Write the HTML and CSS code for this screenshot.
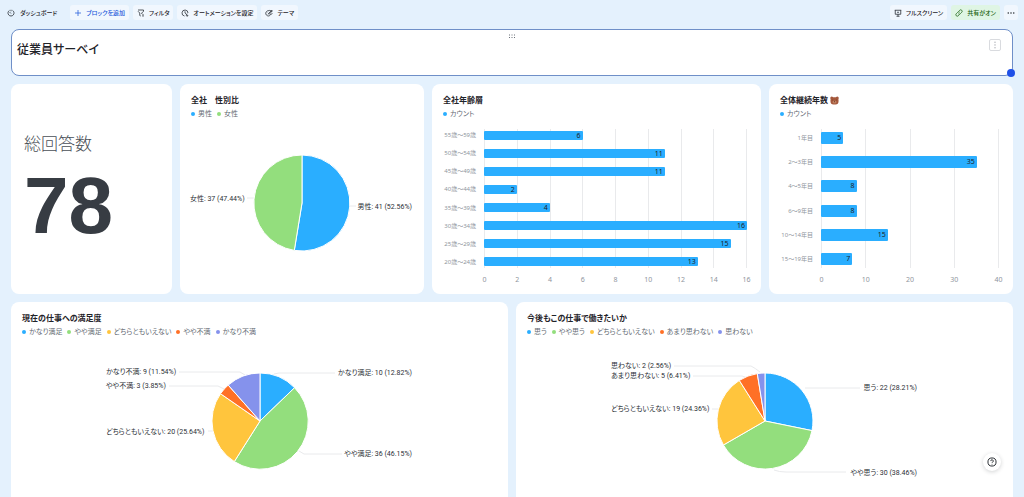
FILE: index.html
```html
<!DOCTYPE html>
<html lang="ja">
<head>
<meta charset="utf-8">
<meta name="viewport" content="width=device-width, initial-scale=1">
<title>従業員サーベイ</title>
<link rel="stylesheet" href="styles.css">
</head>
<body>
<header class="toolbar">
  <div class="view-name">
    <svg class="icon" viewBox="0 0 16 16"><path d="M5 2.8A6 6 0 1 0 11 2.8M8 1.5v3M8 9 5.2 6.2"/></svg>
    <span>ダッシュボード</span>
  </div>
  <button class="btn btn-primary" type="button"><svg class="icon" viewBox="0 0 16 16"><path d="M8 2v12M2 8h12"/></svg>ブロックを追加</button>
  <button class="btn" type="button"><svg class="icon" viewBox="0 0 16 16"><path d="M2 2h11v2.500L9.500 8v2M2 4.500 5.500 8v5l2 1M10 12h4M11 14.500h2"/></svg>フィルタ</button>
  <button class="btn" type="button"><svg class="icon" viewBox="0 0 16 16"><path d="M7 14A6 6 0 1 1 14 8M8 4.500V8l2 1.500M12 9l-2 3.500h4L12 15.500"/></svg>オートメーションを設定</button>
  <button class="btn" type="button"><svg class="icon" viewBox="0 0 16 16"><path d="M14 5C12 1.500 2 2 1.500 8.500c0 6 8 6.500 8 4 0-2 4.500-1 5-4M7 9l6.500-6.500 1 1L9 10 7 10zM4.500 7v.5M7.500 5v.5M4.500 10.500v.5"/></svg>テーマ</button>
  <span class="spacer"></span>
  <button class="btn" type="button"><svg class="icon" viewBox="0 0 16 16"><path d="M1.500 2.500h13M2.500 2.500v8h11v-8M8 10.500v4M5 14.500h6M6 6.500h4"/></svg>フルスクリーン</button>
  <button class="btn btn-shared" type="button"><svg class="icon" viewBox="0 0 16 16"><path d="M7 5l2.500-2.500a2.800 2.800 0 0 1 4 4L10.500 9.500a2.800 2.800 0 0 1-4 0M9 11l-2.500 2.500a2.800 2.800 0 0 1-4-4L5.500 6.500a2.800 2.800 0 0 1 4 0"/></svg>共有がオン</button>
  <button class="btn btn-more" type="button" aria-label="その他"><svg class="icon dots" viewBox="0 0 16 16"><circle cx="2.500" cy="8" r="1.500"/><circle cx="8" cy="8" r="1.500"/><circle cx="13.500" cy="8" r="1.500"/></svg></button>
</header>

<main class="board">
  <section class="card heading selected">
    <h1>従業員サーベイ</h1>
    <svg class="drag" viewBox="0 0 8 5"><path d="M1 1h1M3.500 1h1M6 1h1M1 3.500h1M3.500 3.500h1M6 3.500h1"/></svg>
    <button class="card-menu" type="button" aria-label="メニュー"><svg viewBox="0 0 12 12"><path d="M6 2v1.500M6 5.200v1.500M6 8.500V10"/></svg></button>
    <span class="resize"></span>
  </section>

  <div class="row row-top">
    <section class="card stat">
      <p class="stat-label">総回答数</p>
      <p class="stat-value">78</p>
    </section>

    <section class="card">
      <h2>全社　性別比</h2>
      <ul class="legend"><li class="blue">男性</li><li class="green">女性</li></ul>
      <svg class="pie" viewBox="0 36 244 174">
        <g class="leaders"><path d="M67 114h7M170 122h6"/></g>
        <g class="slices" transform="translate(122 119)">
          <path class="blue" d="M0 0V-48A48 48 0 1 1-7.700 47.400z"/>
          <path class="green" d="M0 0-7.700 47.400A48 48 0 0 1 0-48z"/>
        </g>
        <text x="10" y="117">女性: 37 (47.44%)</text>
        <text class="end" x="232" y="125">男性: 41 (52.56%)</text>
      </svg>
    </section>

    <section class="card">
      <h2>全社年齢層</h2>
      <ul class="legend"><li class="blue">カウント</li></ul>
      <div class="chart">
        <div class="categories"><span>55歳～59歳</span><span>50歳～54歳</span><span>45歳～49歳</span><span>40歳～44歳</span><span>35歳～39歳</span><span>30歳～34歳</span><span>25歳～29歳</span><span>20歳～24歳</span></div>
        <div class="lines"><i></i><i></i><i></i><i></i><i></i><i></i><i></i><i></i><i></i></div>
        <div class="bars">
          <div><b style="width:37.5%">6</b></div>
          <div><b style="width:68.75%">11</b></div>
          <div><b style="width:68.75%">11</b></div>
          <div><b style="width:12.5%">2</b></div>
          <div><b style="width:25%">4</b></div>
          <div><b style="width:100%">16</b></div>
          <div><b style="width:93.75%">15</b></div>
          <div><b style="width:81.25%">13</b></div>
        </div>
        <div class="axis"><span>0</span><span>2</span><span>4</span><span>6</span><span>8</span><span>10</span><span>12</span><span>14</span><span>16</span></div>
      </div>
    </section>

    <section class="card">
      <h2>全体継続年数<svg class="bear" viewBox="0 0 18 18"><circle cx="3.500" cy="4" r="3"/><circle cx="14.500" cy="4" r="3"/><rect x="1" y="2.500" width="16" height="14.500" rx="6"/><ellipse class="muzzle" cx="9" cy="12" rx="4" ry="3"/><path class="face" d="M5 7.500v1M13 7.500v1M8 10.500h2M9 11v1.500"/></svg></h2>
      <ul class="legend"><li class="blue">カウント</li></ul>
      <div class="chart wide-bars">
        <div class="categories"><span>1年目</span><span>2～3年目</span><span>4～5年目</span><span>6～9年目</span><span>10～14年目</span><span>15～19年目</span></div>
        <div class="lines"><i></i><i></i><i></i><i></i><i></i></div>
        <div class="bars">
          <div><b style="width:12.5%">5</b></div>
          <div><b style="width:87.5%">35</b></div>
          <div><b style="width:20%">8</b></div>
          <div><b style="width:20%">8</b></div>
          <div><b style="width:37.5%">15</b></div>
          <div><b style="width:17.5%">7</b></div>
        </div>
        <div class="axis"><span>0</span><span>10</span><span>20</span><span>30</span><span>40</span></div>
      </div>
    </section>
  </div>

  <div class="row row-bottom">
    <section class="card">
      <h2>現在の仕事への満足度</h2>
      <ul class="legend"><li class="blue">かなり満足</li><li class="green">やや満足</li><li class="yellow">どちらともいえない</li><li class="orange">やや不満</li><li class="purple">かなり不満</li></ul>
      <svg class="pie" viewBox="0 36 497 159">
        <g class="leaders"><path d="M168 70h61l5 3M158 84h49l8 4M197 129h5M263 72l5-1h56M288 149l5 3h38"/></g>
        <g class="slices" transform="translate(249 119)">
          <path class="blue" d="M0 0V-48A48 48 0 0 1 34.600-33.300z"/>
          <path class="green" d="M0 0 34.600-33.300A48 48 0 0 1-25.700 40.600z"/>
          <path class="yellow" d="M0 0-25.700 40.600A48 48 0 0 1-39.500-27.300z"/>
          <path class="orange" d="M0 0-39.500-27.300A48 48 0 0 1-31.800-35.900z"/>
          <path class="purple" d="M0 0-31.800-35.900A48 48 0 0 1 0-48z"/>
        </g>
        <text x="95" y="72">かなり不満: 9 (11.54%)</text>
        <text x="95" y="86">やや不満: 3 (3.85%)</text>
        <text x="95" y="132">どちらともいえない: 20 (25.64%)</text>
        <text class="end" x="401" y="73">かなり満足: 10 (12.82%)</text>
        <text class="end" x="401" y="154">やや満足: 36 (46.15%)</text>
      </svg>
    </section>

    <section class="card">
      <h2>今後もこの仕事で働きたいか</h2>
      <ul class="legend"><li class="blue">思う</li><li class="green">やや思う</li><li class="yellow">どちらともいえない</li><li class="orange">あまり思わない</li><li class="purple">思わない</li></ul>
      <svg class="pie" viewBox="0 36 497 159">
        <g class="leaders"><path d="M158 64h77q4 2 9 6M177 74h49l6 2M196 107h6M289 86h55M258 168q5 2 12 2h60"/></g>
        <g class="slices" transform="translate(249 119)">
          <path class="blue" d="M0 0V-48A48 48 0 0 1 47 9.600z"/>
          <path class="green" d="M0 0 47 9.600A48 48 0 0 1-41.600 24z"/>
          <path class="yellow" d="M0 0-41.600 24A48 48 0 0 1-25.700-40.600z"/>
          <path class="orange" d="M0 0-25.700-40.600A48 48 0 0 1-7.700-47.400z"/>
          <path class="purple" d="M0 0-7.700-47.400A48 48 0 0 1 0-48z"/>
        </g>
        <text x="95" y="66">思わない: 2 (2.56%)</text>
        <text x="95" y="76">あまり思わない: 5 (6.41%)</text>
        <text x="95" y="109">どちらともいえない: 19 (24.36%)</text>
        <text class="end" x="401" y="88">思う: 22 (28.21%)</text>
        <text class="end" x="401" y="173">やや思う: 30 (38.46%)</text>
      </svg>
    </section>
  </div>
</main>

<button class="help" type="button" aria-label="ヘルプ"><svg viewBox="0 0 16 16"><circle cx="8" cy="8" r="6.500"/><path d="M6 6.500a2 2 0 1 1 3 1.700q-1 .500-1 1.300M8 11v1"/></svg></button>
</body>
</html>
```
FILE: styles.css
```css
* {
  box-sizing: border-box;
}

body {
  margin: 0;
  min-height: 100vh;
  display: flex;
  flex-direction: column;
  background: #e4f1fd;
  color: #1f2329;
  font-family: "Noto Sans", "Noto Sans CJK JP", sans-serif;
  font-size: 7px;
  line-height: 10px;
  font-feature-settings: "palt";
}

h1, h2, p, ul {
  margin: 0;
  padding: 0;
}

button {
  font: inherit;
  color: inherit;
  font-feature-settings: inherit;
}

/* Toolbar */
.toolbar {
  height: 29px;
  padding: 5px 6px 9px 7px;
  display: flex;
  align-items: center;
  gap: 4px;
  font-family: "Noto Sans CJK JP", sans-serif;
  font-size: 6px;
  font-weight: 500;
  white-space: nowrap;
}

.view-name {
  display: flex;
  align-items: center;
  gap: 5px;
  margin-right: 9px;
}

.spacer {
  flex: 1;
}

.btn {
  height: 15px;
  padding: 0 4px;
  border: 0;
  border-radius: 3px;
  background: #f1f7fe;
  display: flex;
  align-items: center;
  gap: 4px;
}

.btn-primary {
  color: #245bdb;
}

.btn-shared {
  background: #dff5e4;
  color: #186010;
}

.btn-more {
  padding: 0 3px;
}

.icon {
  width: 8px;
  height: 8px;
  fill: none;
  stroke: currentColor;
  stroke-width: 1.5;
}

.dots {
  fill: currentColor;
  stroke: none;
}

/* Board */
.board {
  flex: 1;
  padding: 0 11px;
  display: flex;
  flex-direction: column;
  gap: 8px;
}

.row {
  display: grid;
  gap: 8px;
}

.row-top {
  grid-template-columns: 161fr 244fr 329fr 244fr;
  min-height: 210px;
}

.row-bottom {
  flex: 1;
  grid-template-columns: 1fr 1fr;
}

.card {
  min-width: 0;
  background: #fff;
  border-radius: 8px;
  display: flex;
  flex-direction: column;
}

.row-bottom .card {
  border-radius: 8px 8px 0 0;
}

.card h2 {
  display: flex;
  align-items: center;
  gap: 2px;
  padding: 10px 11px 0;
  font-size: 8px;
  line-height: 12px;
  font-weight: 700;
}

.heading {
  position: relative;
  height: 47px;
  padding: 11px 5px;
  border: 1px solid #6f8fc8;
}

.heading h1 {
  font-size: 12px;
  line-height: 18px;
  font-weight: 500;
}

.drag {
  position: absolute;
  top: 4px;
  left: 50%;
  width: 8px;
  height: 5px;
  margin-left: -4px;
  stroke: #6b7078;
}

.card-menu {
  position: absolute;
  top: 9px;
  right: 11px;
  width: 12px;
  height: 12px;
  padding: 0;
  border: 1px solid #d9dbdf;
  border-radius: 2px;
  background: #fff;
  display: grid;
}

.card-menu svg {
  fill: none;
  stroke: #8a8f98;
}

.resize {
  position: absolute;
  right: -3px;
  bottom: -2px;
  width: 8px;
  height: 8px;
  border-radius: 50%;
  background: #1f50e8;
}

.bear {
  width: 9px;
  height: 9px;
  fill: #a4583c;
}

.bear .muzzle {
  fill: #c08060;
}

.bear .face {
  stroke: #3d1f16;
}

/* Number card */
.stat {
  padding: 48px 13px 0;
}

.stat-label {
  font-size: 17px;
  line-height: 24px;
  font-weight: 300;
  color: #4a4f57;
}

.stat-value {
  font-family: "Liberation Sans", sans-serif;
  font-size: 80px;
  line-height: 100px;
  font-weight: 700;
  color: #373c43;
}

/* Legend */
.legend {
  list-style: none;
  display: flex;
  flex-wrap: wrap;
  gap: 5px;
  padding: 3px 11px 1px;
  color: #646a73;
}

.legend li {
  display: flex;
  align-items: center;
  gap: 3px;
}

.legend li::before {
  content: "";
  width: 4px;
  height: 4px;
  border-radius: 50%;
  background: currentColor;
}

.legend .blue::before { background: #2aaeff; }
.legend .green::before { background: #93de7d; }
.legend .yellow::before { background: #ffc53d; }
.legend .orange::before { background: #ff7026; }
.legend .purple::before { background: #8592ec; }

/* Pie charts */
.pie {
  display: block;
  width: 100%;
}

.pie text {
  font-family: Roboto, "Noto Sans CJK JP", sans-serif;
  font-size: 7px;
  fill: #2b2f36;
}

.pie .end {
  text-anchor: end;
}

.leaders {
  fill: none;
  stroke: #e9eaec;
}

.slices {
  stroke: #fff;
  stroke-linejoin: round;
}

.slices .blue { fill: #2aaeff; }
.slices .green { fill: #93de7d; }
.slices .yellow { fill: #ffc53d; }
.slices .orange { fill: #ff7026; }
.slices .purple { fill: #8592ec; }

/* Bar charts */
.chart {
  flex: 1;
  display: grid;
  grid-template-columns: 33px 1fr;
  grid-template-rows: 145px 12px;
  column-gap: 8px;
  padding: 6px 14px 0 11px;
}

.categories,
.bars {
  display: flex;
  flex-direction: column;
  grid-row: 1;
}

.categories {
  grid-column: 1;
  align-items: flex-end;
  color: #8f959e;
  font-size: 6px;
  white-space: nowrap;
}

.categories span,
.bars div {
  flex: 1;
  display: flex;
  align-items: center;
}

.bars,
.lines {
  grid-area: 1 / 2;
}

.lines {
  display: flex;
  justify-content: space-between;
  padding: 3px 0;
}

.lines i {
  width: 1px;
  background: #e9eaec;
}

.bars b {
  height: 9px;
  padding-right: 2px;
  border-radius: 1px;
  background: #2aaeff;
  font-weight: 400;
  line-height: 9px;
  text-align: right;
}

.wide-bars .bars b {
  height: 12px;
  line-height: 12px;
}

.axis {
  grid-area: 2 / 2;
  display: flex;
  justify-content: space-between;
  padding-top: 4px;
  color: #8f959e;
  font-size: 7px;
}

.axis span {
  width: 1px;
  display: flex;
  justify-content: center;
}

/* Help */
.help {
  position: fixed;
  right: 23px;
  bottom: 26px;
  width: 18px;
  height: 18px;
  padding: 0;
  border: 0;
  border-radius: 50%;
  background: #fff;
  box-shadow: 0 1px 4px rgba(31, 35, 41, 0.2);
  display: grid;
  place-items: center;
}

.help svg {
  width: 10px;
  height: 10px;
  fill: none;
  stroke: #1f2329;
  stroke-width: 1.5;
}
```
